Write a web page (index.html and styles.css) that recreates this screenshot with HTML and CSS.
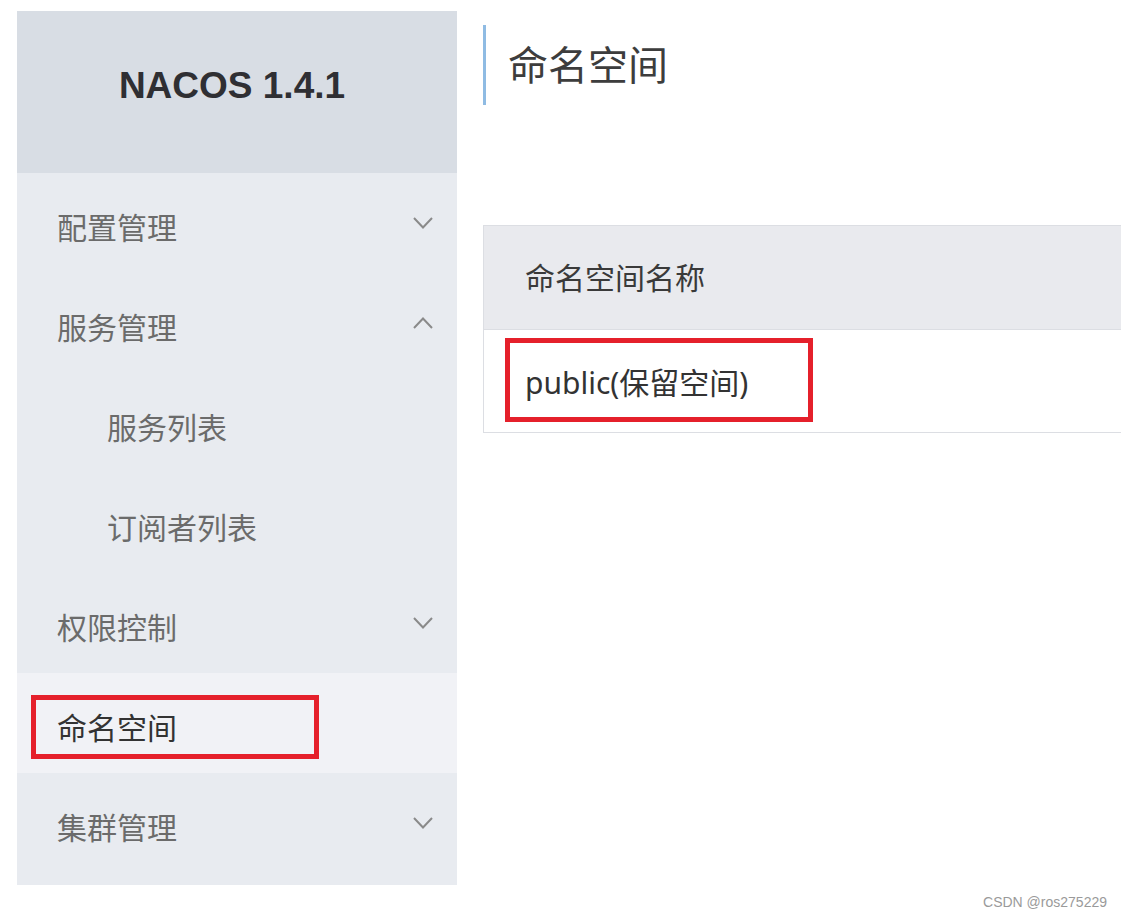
FILE: index.html
```html
<!DOCTYPE html>
<html lang="zh-CN">
<head>
<meta charset="utf-8">
<title>命名空间</title>
<link rel="stylesheet" href="styles.css">
</head>
<body>
<div class="page">
  <aside class="sidebar">
    <div class="brand">NACOS 1.4.1</div>
    <nav class="menu">
      <div class="item"><span class="label">配置管理</span><svg class="chev" viewBox="0 0 20 12"><path d="M1 1 L10 10.5 L19 1"/></svg></div>
      <div class="item"><span class="label">服务管理</span><svg class="chev" viewBox="0 0 20 12"><path d="M1 11 L10 1.5 L19 11"/></svg></div>
      <div class="item sub"><span class="label">服务列表</span></div>
      <div class="item sub"><span class="label">订阅者列表</span></div>
      <div class="item"><span class="label">权限控制</span><svg class="chev" viewBox="0 0 20 12"><path d="M1 1 L10 10.5 L19 1"/></svg></div>
      <div class="item active"><span class="label">命名空间</span><span class="mark mark-nav"></span></div>
      <div class="item"><span class="label">集群管理</span><svg class="chev" viewBox="0 0 20 12"><path d="M1 1 L10 10.5 L19 1"/></svg></div>
    </nav>
  </aside>
  <main class="main">
    <h1 class="title">命名空间</h1>
    <div class="table">
      <div class="thead">命名空间名称</div>
      <div class="trow"><span class="cell">public(保留空间)</span><span class="mark mark-row"></span></div>
    </div>
  </main>
  <div class="watermark">CSDN @ros275229</div>
</div>
</body>
</html>
```

FILE: styles.css
```css
html, body {
  margin: 0;
  padding: 0;
  background: #ffffff;
}

body {
  width: 1121px;
  height: 917px;
  overflow: hidden;
  font-family: "Noto Sans", "Noto Sans CJK SC", sans-serif;
}

.page {
  position: relative;
  display: flex;
  align-items: flex-start;
  height: 917px;
}

.sidebar {
  width: 440px;
  margin: 11px 0 0 17px;
  background: #e8ebf0;
  padding-bottom: 12px;
}

.brand {
  height: 162px;
  background: #d8dde4;
  display: flex;
  align-items: center;
  justify-content: center;
  font-family: "Liberation Sans", Arial, sans-serif;
  font-weight: bold;
  font-size: 37px;
  color: #2f2f33;
  padding: 0 10px 12px 0;
  box-sizing: border-box;
}

.menu {
  display: flex;
  flex-direction: column;
}

.item {
  position: relative;
  height: 100px;
  display: flex;
  align-items: center;
  justify-content: space-between;
  padding: 0 24px 0 40px;
  box-sizing: border-box;
  font-family: "Noto Sans CJK SC", sans-serif;
  font-size: 30px;
  color: #6b6b6b;
}

.item .label {
  padding-top: 6px;
}

.item.sub {
  padding-left: 90px;
}

.item.active {
  background: #f1f2f6;
  color: #333333;
}

.chev {
  width: 20px;
  height: 12px;
  fill: none;
  stroke: #8a8a8a;
  stroke-width: 2;
}

.main {
  flex: 1;
  margin-left: 26px;
  padding-top: 25px;
}

.title {
  margin: 0;
  height: 80px;
  border-left: 3px solid #8fbbe3;
  padding: 0 0 4px 22px;
  display: flex;
  align-items: center;
  font-family: "Noto Sans CJK SC", sans-serif;
  font-weight: normal;
  font-size: 40px;
  color: #3d3d3d;
  box-sizing: border-box;
}

.table {
  margin-top: 120px;
  border: 1px solid #dcdee3;
  border-right: none;
  margin-right: -10px;
}

.thead {
  height: 104px;
  background: #e9eaee;
  border-bottom: 1px solid #dcdee3;
  box-sizing: border-box;
  display: flex;
  align-items: center;
  padding: 0 0 3px 41px;
  font-family: "Noto Sans CJK SC", sans-serif;
  font-size: 30px;
  color: #3a3a3a;
}

.trow {
  position: relative;
  height: 102px;
  display: flex;
  align-items: center;
  padding-left: 41px;
  font-size: 30px;
  color: #333333;
  box-sizing: border-box;
}

.mark {
  position: absolute;
  border: 5px solid #e5202b;
  box-sizing: border-box;
}

.mark-nav {
  left: 14px;
  top: 22px;
  width: 288px;
  height: 64px;
}

.mark-row {
  left: 21px;
  top: 8px;
  width: 308px;
  height: 84px;
}

.watermark {
  position: absolute;
  right: 14px;
  bottom: 7px;
  font-family: "Liberation Sans", Arial, sans-serif;
  font-size: 14px;
  color: #9a9a9a;
}
```
